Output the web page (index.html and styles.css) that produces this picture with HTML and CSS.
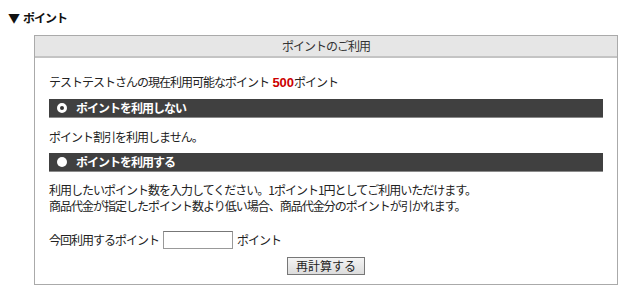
FILE: index.html
```html
<!DOCTYPE html>
<html lang="ja">
  <head>
    <meta charset="UTF-8" />
    <title>ポイントのご利用</title>
    <link rel="stylesheet" href="styles.css">
  </head>
  <body>
    <h2 class="section-title"><span class="mark">▼</span>ポイント</h2>
    <div class="point-box">
      <div class="point-head">ポイントのご利用</div>
      <div class="point-body">
        <p class="point-now">テストテストさんの現在利用可能なポイント&nbsp;&nbsp;<span class="point-num">500</span>ポイント</p>

        <div class="option-bar"><span class="radio checked"></span>ポイントを利用しない</div>
        <p class="option-note">ポイント割引を利用しません。</p>

        <div class="option-bar"><span class="radio"></span>ポイントを利用する</div>
        <p class="option-note lines">利用したいポイント数を入力してください。1ポイント1円としてご利用いただけます。<br>商品代金が指定したポイント数より低い場合、商品代金分のポイントが引かれます。</p>

        <p class="point-input">今回利用するポイント <input type="text" id="use-point"> ポイント</p>
        <div class="recalc"><button id="recalc-button">再計算する</button></div>
      </div>
    </div>
  </body>
</html>
```

FILE: styles.css
```css
body {
  margin: 0;
  padding: 11px 0 0 8px;
  font-family: "Noto Sans CJK JP", "Liberation Sans", sans-serif;
  font-size: 12px;
  color: #222;
  background: #fff;
}
p {
  margin: 0;
}
.section-title {
  margin: 0 0 10px 0;
  font-size: 12px;
  line-height: 14px;
  font-weight: bold;
  color: #111;
  letter-spacing: -1px;
}
.section-title .mark {
  margin-right: 4px;
}
.point-box {
  width: 582px;
  margin-left: 26px;
  border: 1px solid #aaa;
}
.point-head {
  height: 20px;
  line-height: 20px;
  text-align: center;
  background-color: #e6e6e6;
  border-bottom: 2px solid #c4c4c4;
  color: #333;
  letter-spacing: -1px;
}
.point-body {
  padding: 0 14px 9px;
  line-height: 16px;
  letter-spacing: -1px;
}
.point-now {
  margin-top: 16px;
}
.point-num {
  color: #cc0000;
  font-weight: bold;
  font-family: "Liberation Sans", sans-serif;
  font-size: 13px;
  letter-spacing: 0;
}
.option-bar {
  display: flex;
  align-items: center;
  height: 18px;
  margin-top: 8px;
  padding-left: 8px;
  background-color: #404040;
  border-bottom: 1px solid #8a8a8a;
  color: #fff;
  font-weight: bold;
}
.option-note {
  margin-top: 11px;
}
.option-bar + .option-note.lines {
  margin-top: 10px;
}
.option-note + .option-bar {
  margin-top: 8px;
}
.radio {
  width: 10px;
  height: 10px;
  margin-right: 9px;
  border-radius: 50%;
  background-color: #fff;
  box-sizing: border-box;
}
.radio.checked {
  border: 3px solid #fff;
  background-color: #333;
}
.point-input {
  display: flex;
  align-items: center;
  gap: 4px;
  margin-top: 17px;
}
#use-point {
  width: 64px;
  height: 16px;
  padding: 0 2px;
  border: 1px solid #999;
  border-top-color: #777;
  font-size: 12px;
}
.recalc {
  margin-top: 8px;
  text-align: center;
}
#recalc-button {
  height: 18px;
  padding: 0 8px;
  font-family: "Noto Sans CJK JP", sans-serif;
  font-size: 12px;
  line-height: 14px;
  color: #222;
  background: linear-gradient(#f4f4f4, #dcdcdc);
  border: 1px solid #777;
  border-radius: 0;
}
```
